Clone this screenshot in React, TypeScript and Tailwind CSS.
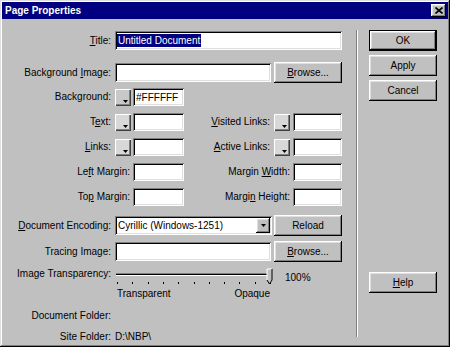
import React from "react";

const font = { fontFamily: '"Liberation Sans", Arial, sans-serif' };

const raised =
  "bg-[#c0c0c0] shadow-[inset_-1px_-1px_#000,inset_1px_1px_#fff,inset_-2px_-2px_#808080,inset_2px_2px_#dfdfdf]";
const sunken =
  "bg-white shadow-[inset_1px_1px_#808080,inset_-1px_-1px_#fff,inset_2px_2px_#000,inset_-2px_-2px_#dfdfdf]";

const U = ({ children }: { children: React.ReactNode }) => (
  <span className="underline underline-offset-[1px]">{children}</span>
);

const Button = ({
  children,
  className = "",
}: {
  children: React.ReactNode;
  className?: string;
}) => (
  <div
    className={`w-[68px] h-[21px] shrink-0 flex items-center justify-center text-[10px] leading-[12px] ${raised} ${className}`}
  >
    {children}
  </div>
);

const Field = ({
  w,
  h = "h-[18px]",
  children,
}: {
  w: string;
  h?: string;
  children?: React.ReactNode;
}) => (
  <div className={`${w} ${h} ${sunken} shrink-0 flex items-center pl-[3px] text-[10px]`}>
    {children}
  </div>
);

const Swatch = ({ light = false }: { light?: boolean }) => (
  <div
    className={`relative w-[16px] h-[17px] shrink-0 ${
      light ? "bg-[#d8d8d8]" : "bg-[#c8c8c8]"
    } shadow-[inset_1px_1px_#fff,inset_-1px_-1px_#404040,inset_-2px_-2px_#808080]`}
  >
    <svg className="absolute right-[3px] bottom-[3px]" width="5" height="3" viewBox="0 0 5 3">
      <polygon points="0,0 5,0 2.5,3" fill="#000" />
    </svg>
  </div>
);

const Label = ({ children, w = "w-[109px]" }: { children: React.ReactNode; w?: string }) => (
  <div className={`${w} text-right text-[10px] leading-[12px] shrink-0`}>{children}</div>
);

const Slider = () => {
  const ticks = Array.from({ length: 11 }, (_, i) => 3 + Math.round(i * 15.3));
  return (
    <svg width="160" height="19" viewBox="0 0 160 19">
      <rect x="2" y="5" width="152" height="1" fill="#808080" />
      <rect x="2" y="6" width="152" height="1" fill="#000" />
      <rect x="2" y="7" width="152" height="1" fill="#fff" />
      {ticks.map((x) => (
        <rect key={x} x={x} y="14" width="1" height="2" fill="#000" />
      ))}
      <polygon points="153,1 158,1 158,12 155.5,16 153,12" fill="#c0c0c0" />
      <polyline points="153,12 153,1 158,1" fill="none" stroke="#fff" strokeWidth="1" />
      <polyline points="158,1 158,12 155.5,16 153,12" fill="none" stroke="#000" strokeWidth="1" />
    </svg>
  );
};

export default function App() {
  return (
    <div
      style={font}
      className="w-[450px] h-[347px] bg-[#c0c0c0] p-[2px] flex flex-col text-black shadow-[inset_-1px_-1px_#000,inset_1px_1px_#dfdfdf,inset_-2px_-2px_#808080,inset_2px_2px_#fff]"
    >
      {/* title bar */}
      <div className="h-[17px] bg-[#000080] flex items-center justify-between pl-[3px] pr-[2px]">
        <span className="text-white font-bold text-[10px] leading-[12px]">Page Properties</span>
        <div className={`w-[15px] h-[13px] flex items-center justify-center ${raised}`}>
          <svg width="8" height="7" viewBox="0 0 8 7">
            <path d="M0.5 0.5 L7.5 6.5 M7.5 0.5 L0.5 6.5" stroke="#000" strokeWidth="1.6" />
          </svg>
        </div>
      </div>

      <div className="flex flex-1">
        {/* left panel */}
        <div className="w-[354px] shrink-0 pt-[12px] flex flex-col">
          <div className="flex items-center gap-[4px] h-[19px]">
            <Label>
              <U>T</U>itle:
            </Label>
            <Field w="w-[227px]" h="h-[19px]">
              <span className="bg-[#000080] text-white px-[1px] leading-[13px] -ml-[1px]">
                Untitled Document
              </span>
            </Field>
          </div>

          <div className="flex items-center gap-[4px] h-[21px] mt-[12px]">
            <Label>
              Background <U>I</U>mage:
            </Label>
            <Field w="w-[156px]" h="h-[19px]" />
            <Button className="ml-[-1px]">
              <span>
                <U>B</U>rowse...
              </span>
            </Button>
          </div>

          <div className="flex items-center h-[18px] mt-[5px]">
            <Label>Background:</Label>
            <div className="ml-[4px] shrink-0">
              <Swatch />
            </div>
            <div className="ml-[2px] shrink-0">
              <Field w="w-[51px]">#FFFFFF</Field>
            </div>
          </div>

          {[
            { l: <>T<U>e</U>xt:</>, r: <><U>V</U>isited Links:</>, sw: true },
            { l: <><U>L</U>inks:</>, r: <><U>A</U>ctive Links:</>, sw: true },
            { l: <>Le<U>f</U>t Margin:</>, r: <>Margin <U>W</U>idth:</>, sw: false },
            { l: <>To<U>p</U> Margin:</>, r: <>Margi<U>n</U> Height:</>, sw: false },
          ].map((row, i) => (
            <div key={i} className="flex items-center h-[18px] mt-[7px]">
              <div className="w-[182px] shrink-0 flex items-center justify-end">
                <span className="text-[10px] leading-[12px]">{row.l}</span>
                {row.sw && (
                  <div className="ml-[4px] shrink-0">
                    <Swatch light />
                  </div>
                )}
                <div className={row.sw ? "ml-[2px] shrink-0" : "ml-[3px] shrink-0"}>
                  <Field w="w-[51px]" />
                </div>
              </div>
              <div className="w-[158px] shrink-0 flex items-center justify-end">
                <span className="text-[10px] leading-[12px]">{row.r}</span>
                {row.sw && (
                  <div className="ml-[4px] shrink-0">
                    <Swatch light />
                  </div>
                )}
                <div className="ml-[3px] shrink-0">
                  <Field w="w-[49px]" />
                </div>
              </div>
            </div>
          ))}

          <div className="flex items-center gap-[4px] h-[21px] mt-[9px]">
            <Label>
              <U>D</U>ocument Encoding:
            </Label>
            <div className={`w-[157px] h-[19px] shrink-0 ${sunken} flex items-center justify-between pl-[3px] pr-[2px]`}>
              <span className="text-[10px] leading-[12px]">Cyrillic (Windows-1251)</span>
              <div className={`w-[14px] h-[15px] flex items-center justify-center ${raised}`}>
                <svg width="5" height="3" viewBox="0 0 5 3">
                  <polygon points="0,0 5,0 2.5,3" fill="#000" />
                </svg>
              </div>
            </div>
            <Button className="ml-[-2px]">Reload</Button>
          </div>

          <div className="flex items-center gap-[4px] h-[21px] mt-[5px]">
            <Label>Tracing Image:</Label>
            <Field w="w-[156px]" h="h-[19px]" />
            <Button className="ml-[-1px]">
              <span>
                <U>B</U>rowse...
              </span>
            </Button>
          </div>

          <div className="flex items-start mt-[6px]">
            <Label>Image Transparency:</Label>
            <div className="ml-[3px] flex flex-col">
              <Slider />
              <div className="flex justify-between w-[156px] pl-[3px] text-[10px] leading-[12px] mt-[1px]">
                <span>Transparent</span>
                <span>Opaque</span>
              </div>
            </div>
            <span className="ml-[11px] mt-[4px] text-[10px] leading-[12px]">100%</span>
          </div>

          <div className="flex mt-[10px]">
            <Label>Document Folder:</Label>
          </div>
          <div className="flex items-center gap-[4px] mt-[9px]">
            <Label>Site Folder:</Label>
            <span className="text-[10px] leading-[12px]">D:\NBP\</span>
          </div>
        </div>

        {/* separator */}
        <div className="w-[2px] h-[307px] mt-[11px] border-l border-[#808080] bg-white" />

        {/* right panel */}
        <div className="pl-[11px] pt-[11px] flex flex-col">
          <Button className="border border-black">OK</Button>
          <Button className="mt-[4px]">Apply</Button>
          <Button className="mt-[4px]">Cancel</Button>
          <Button className="mt-[171px]">
            <span>
              <U>H</U>elp
            </span>
          </Button>
        </div>
      </div>
    </div>
  );
}
